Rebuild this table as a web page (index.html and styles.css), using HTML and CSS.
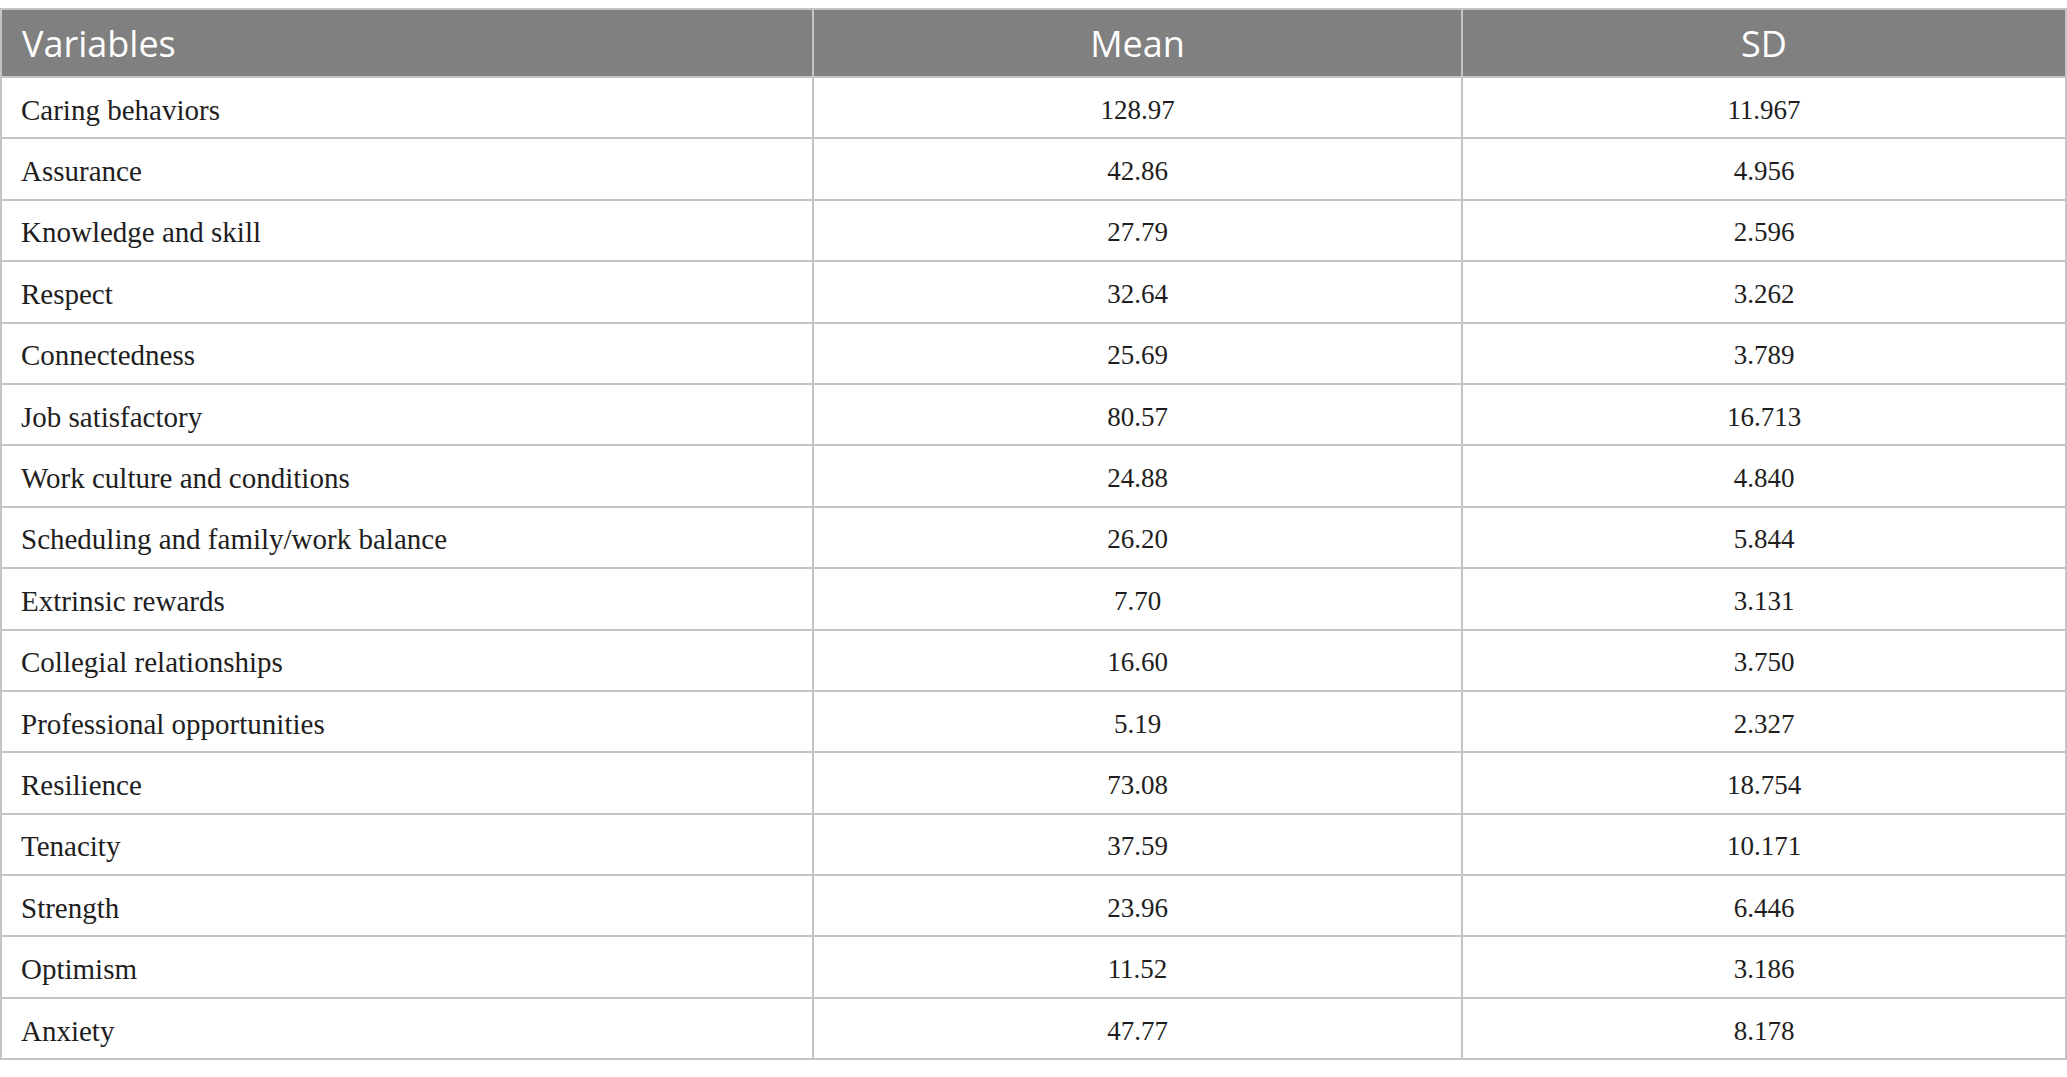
FILE: index.html
```html
<!DOCTYPE html>
<html lang="en">
<head>
<meta charset="utf-8">
<title>Table</title>
<link rel="stylesheet" href="styles.css">
</head>
<body>
<div class="wrap">
<table class="data">
  <colgroup>
    <col class="c1"><col class="c2"><col class="c3">
  </colgroup>
  <thead>
    <tr><th class="left">Variables</th><th>Mean</th><th>SD</th></tr>
  </thead>
  <tbody>
    <tr><td class="left">Caring behaviors</td><td>128.97</td><td>11.967</td></tr>
    <tr><td class="left">Assurance</td><td>42.86</td><td>4.956</td></tr>
    <tr><td class="left">Knowledge and skill</td><td>27.79</td><td>2.596</td></tr>
    <tr><td class="left">Respect</td><td>32.64</td><td>3.262</td></tr>
    <tr><td class="left">Connectedness</td><td>25.69</td><td>3.789</td></tr>
    <tr><td class="left">Job satisfactory</td><td>80.57</td><td>16.713</td></tr>
    <tr><td class="left">Work culture and conditions</td><td>24.88</td><td>4.840</td></tr>
    <tr><td class="left">Scheduling and family/work balance</td><td>26.20</td><td>5.844</td></tr>
    <tr><td class="left">Extrinsic rewards</td><td>7.70</td><td>3.131</td></tr>
    <tr><td class="left">Collegial relationships</td><td>16.60</td><td>3.750</td></tr>
    <tr><td class="left">Professional opportunities</td><td>5.19</td><td>2.327</td></tr>
    <tr><td class="left">Resilience</td><td>73.08</td><td>18.754</td></tr>
    <tr><td class="left">Tenacity</td><td>37.59</td><td>10.171</td></tr>
    <tr><td class="left">Strength</td><td>23.96</td><td>6.446</td></tr>
    <tr><td class="left">Optimism</td><td>11.52</td><td>3.186</td></tr>
    <tr><td class="left">Anxiety</td><td>47.77</td><td>8.178</td></tr>
  </tbody>
</table>
</div>
</body>
</html>
```
FILE: styles.css
```css
html, body {
  margin: 0;
  padding: 0;
  background: #ffffff;
}
.wrap {
  padding-top: 8px;
}
.data {
  width: 2065px;
  border-collapse: collapse;
  table-layout: fixed;
}
.c1 { width: 812px; }
.c2 { width: 649px; }
.c3 { width: 604px; }
.data th {
  background: #7f807f;
  color: #ffffff;
  font-family: "Open Sans", "Noto Sans", sans-serif;
  font-weight: 400;
  font-size: 36px;
  height: 66px;
  padding: 0 20px;
  text-align: center;
  border: 2px solid #c4c4c4;
  vertical-align: middle;
}
.data td {
  font-family: "Liberation Serif", "Times New Roman", serif;
  font-size: 27px;
  line-height: 32px;
  color: #1e1e1e;
  height: 55.4px;
  padding: 4px 19px 0 19px;
  text-align: center;
  border: 2px solid #c4c4c4;
  vertical-align: middle;
}
.data td.left {
  font-size: 29px;
}
.data .left {
  text-align: left;
}
```
